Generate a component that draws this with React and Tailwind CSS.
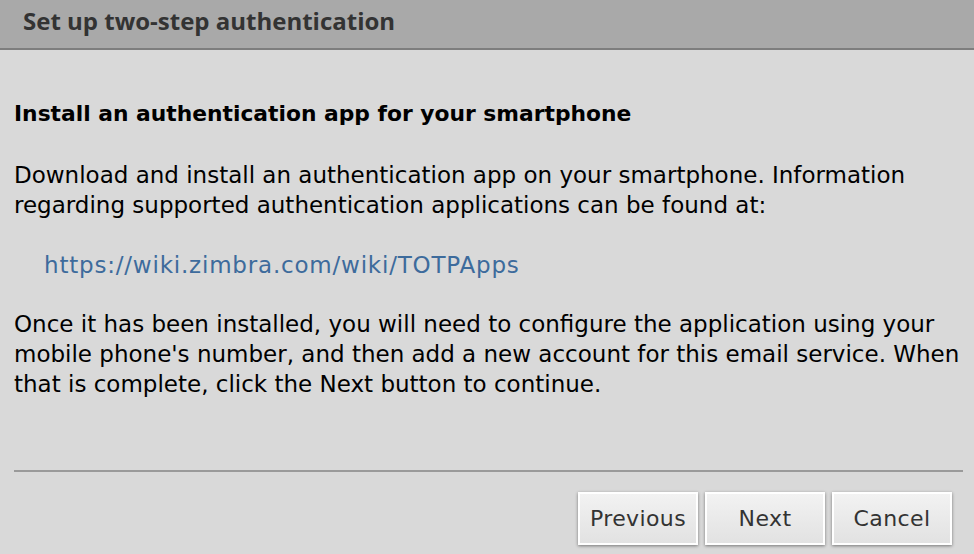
export default function App() {
  return (
    <div className="w-[974px] h-[554px] bg-[#d9d9d9] flex flex-col overflow-hidden font-['DejaVu_Sans',sans-serif]">
      {/* Title bar */}
      <div className="h-[50px] shrink-0 bg-[#a9a9a9] border-b-2 border-[#7e7e7e] flex items-center px-[23px] pb-[6px]">
        <h1 className="text-[24px] font-bold text-[#333] font-['Open_Sans',sans-serif]">
          Set up two-step authentication
        </h1>
      </div>

      {/* Body */}
      <div className="flex-1 flex flex-col px-[14px]">
        <div className="pt-[49px] text-[23px] leading-[30px] text-black whitespace-nowrap">
          <p className="font-bold text-[21.8px]">Install an authentication app for your smartphone</p>
          <p className="mt-[31px]">
            Download and install an authentication app on your smartphone. Information
            <br />
            regarding supported authentication applications can be found at:
          </p>
          <p className="mt-[30px] pl-[30px] text-[#3d6b9c] tracking-[0.8px]">https://wiki.zimbra.com/wiki/TOTPApps</p>
          <p className="mt-[29px]">
            Once it has been installed, you will need to configure the application using your
            <br />
            mobile phone's number, and then add a new account for this email service. When
            <br />
            that is complete, click the Next button to continue.
          </p>
        </div>

        <div className="mt-auto border-t-2 border-[#9a9a9a] mr-[-3px]" />

        <div className="flex justify-end gap-[7px] pt-[20px] pb-[9px] pr-[8px]">
          {["Previous", "Next", "Cancel"].map((label) => (
            <button
              key={label}
              className="w-[120px] h-[53px] border-2 border-white bg-gradient-to-b from-[#f2f2f2] to-[#e2e2e2] shadow-[0_1px_3px_rgba(0,0,0,0.45)] text-[22px] tracking-[0.4px] text-[#333]"
            >
              {label}
            </button>
          ))}
        </div>
      </div>
    </div>
  );
}
